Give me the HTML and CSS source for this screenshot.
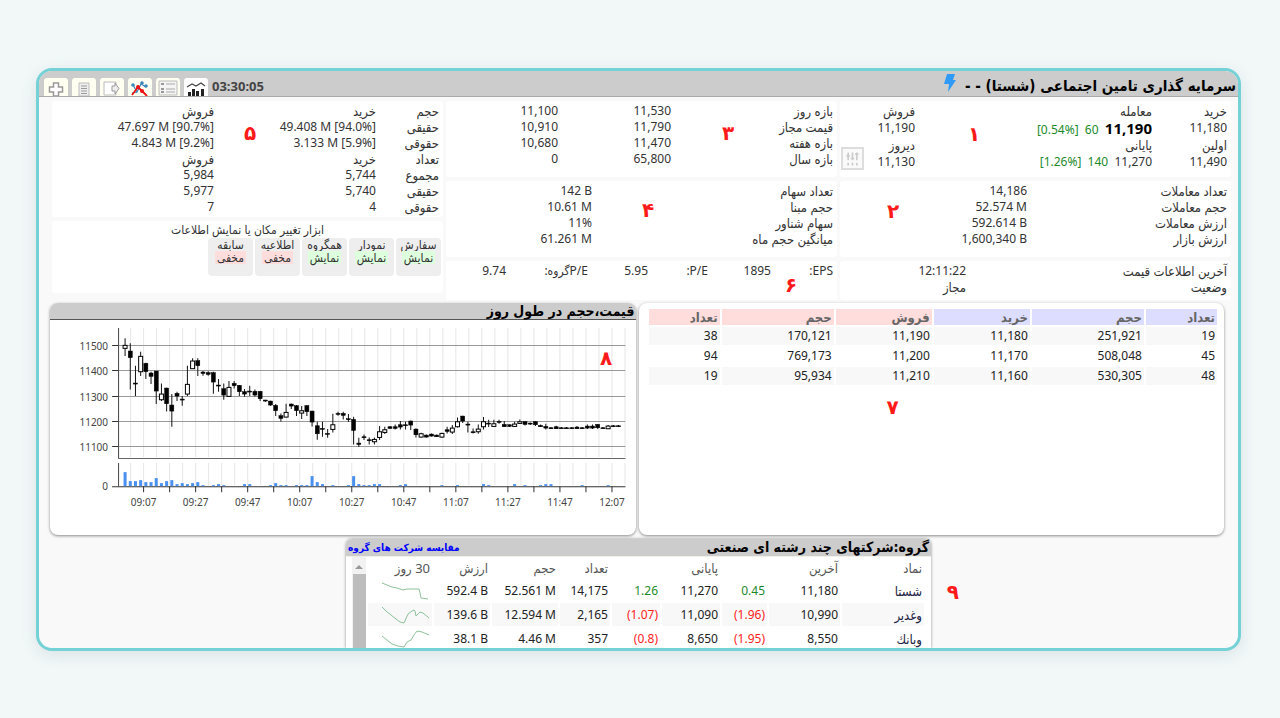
FILE: index.html
```html
<!DOCTYPE html>
<html lang="fa" dir="rtl">
<head>
<meta charset="utf-8">
<meta name="viewport" content="width=device-width, initial-scale=1">
<title>شستا</title>
<link rel="stylesheet" href="styles.css">
</head>
<body>
<main class="frame">
  <header class="topbar">
    <h1 class="topbar-title">سرمایه گذاری تامین اجتماعی (شستا) - -</h1>
    <svg class="bolt" viewBox="0 0 12 18" aria-hidden="true"><path d="M3 0h8L9 6h3L4 18l1-8H0z" fill="#2f9bf7"/></svg>
    <div class="topbar-tools">
      <button class="tab" aria-label="افزودن"><svg viewBox="0 0 24 18"><path d="M9.500 5h5v4h4v5h-4v4h-5v-4h-4V9h4z" fill="#fff" stroke="#999" stroke-width="1.500"/></svg></button>
      <button class="tab" aria-label="یادداشت"><svg viewBox="0 0 24 18"><path d="M7 5h10v13H7z" fill="#eee" stroke="#bbb"/><path d="M9 8h6M9 10.500h6M9 13h6M9 15.500h6" stroke="#999"/></svg></button>
      <button class="tab" aria-label="خروجی"><svg viewBox="0 0 24 18"><path d="M4 4h12v13H4z" fill="#fff" stroke="#bbb"/><path d="M12 8h3V5l4 5.500-4 5.500v-3h-3z" fill="#eee" stroke="#999"/></svg></button>
      <button class="tab" aria-label="نمودار مقایسه"><svg viewBox="0 0 24 18"><path d="M5 7l4 7 4-8 5 3M4 15l5-1" fill="none" stroke="#3b87b8" stroke-width="1.200"/><path d="M4 17l6-8 4 4 5 5" fill="none" stroke="#e11" stroke-width="1.800"/><g fill="#3b87b8"><circle cx="5" cy="7" r="1.800"/><circle cx="14" cy="5" r="1.800"/><circle cx="18" cy="8" r="1.800"/></g><g fill="#e11"><circle cx="10" cy="9" r="2"/><circle cx="14" cy="13" r="2"/></g></svg></button>
      <button class="tab" aria-label="فهرست"><svg viewBox="0 0 24 18"><path d="M3 3h18v14H3z" fill="#f4f4f4" stroke="#bbb"/><path d="M5 6h3M5 11h3M5 14h3" stroke="#999" stroke-width="2"/><path d="M10 6h9M10 11h9M10 14h9" stroke="#aaa"/></svg></button>
      <button class="tab tab-active" aria-label="آمار"><svg viewBox="0 0 24 18"><path d="M4 18v-4h3v4zM8 18v-7h3v7zM12 18v-5h3v5zM17 18v-7h3v7z" fill="#222"/><path d="M3 9l5-3 4 2 5-3 4 3" fill="none" stroke="#444" stroke-width="1.200"/></svg></button>
      <time class="clock">03:30:05</time>
    </div>
  </header>

  <section class="info">
    <div class="stack">
      <div class="panel quote">
        <span>خرید</span><span>معامله</span><span>فروش</span>
        <span class="n">11,180</span><span class="n"><span class="up">[0.54%]&nbsp; 60</span>&nbsp; <b class="last">11,190</b></span><span class="n">11,190</span>
        <span>اولین</span><span>پایانی</span><span>دیروز</span>
        <span class="n">11,490</span><span class="n"><span class="up">[1.26%]&nbsp; 140</span>&nbsp; 11,270</span><span class="n">11,130</span>
        <button class="adjust" aria-label="تنظیمات"><svg viewBox="0 0 22 22"><path d="M6 4v9M11 4v9M16 4v9M4 8h4M9 11h4M14 6h4M6 16v3M11 16v3M16 16v3" stroke="#ccc" stroke-width="2"/></svg></button>
        <span class="mark mark-1">۱</span>
      </div>
      <div class="panel trades">
        <span>تعداد معاملات</span><span class="n">14,186</span>
        <span>حجم معاملات</span><span class="n">52.574 M</span>
        <span>ارزش معاملات</span><span class="n">592.614 B</span>
        <span>ارزش بازار</span><span class="n">1,600,340 B</span>
        <span class="mark mark-2">۲</span>
      </div>
      <div class="panel status">
        <span>آخرین اطلاعات قیمت</span><span class="n">12:11:22</span>
        <span>وضعیت</span><span>مجاز</span>
      </div>
    </div>
    <div class="stack">
      <div class="panel ranges">
        <span>بازه روز</span><span class="n">11,530</span><span class="n">11,100</span>
        <span>قیمت مجاز</span><span class="n">11,790</span><span class="n">10,910</span>
        <span>بازه هفته</span><span class="n">11,470</span><span class="n">10,680</span>
        <span>بازه سال</span><span class="n">65,800</span><span class="n">0</span>
        <span class="mark mark-3">۳</span>
      </div>
      <div class="panel shares">
        <span>تعداد سهام</span><span class="n">142 B</span>
        <span>حجم مبنا</span><span class="n">10.61 M</span>
        <span>سهام شناور</span><span class="n">11%</span>
        <span>میانگین حجم ماه</span><span class="n">61.261 M</span>
        <span class="mark mark-4">۴</span>
      </div>
      <div class="panel ratios">
        <span>EPS:</span><span class="n">1895</span>
        <span>P/E:</span><span class="n">5.95</span>
        <span>P/Eگروه:</span><span class="n">9.74</span>
        <span class="mark mark-6">۶</span>
      </div>
    </div>
    <div class="stack">
      <div class="panel clients">
        <span>حجم</span><span>خرید</span><span>فروش</span>
        <span>حقیقی</span><span class="n">49.408 M [94.0%]</span><span class="n">47.697 M [90.7%]</span>
        <span>حقوقی</span><span class="n">3.133 M [5.9%]</span><span class="n">4.843 M [9.2%]</span>
        <span>تعداد</span><span>خرید</span><span>فروش</span>
        <span>مجموع</span><span class="n">5,744</span><span class="n">5,984</span>
        <span>حقیقی</span><span class="n">5,740</span><span class="n">5,977</span>
        <span>حقوقی</span><span class="n">4</span><span class="n">7</span>
        <span class="mark mark-5">۵</span>
      </div>
      <div class="panel tools">
        <p class="tools-title">ابزار تغییر مکان یا نمایش اطلاعات</p>
        <div class="tools-row">
          <button class="tool">سفارش<span class="on">نمایش</span></button>
          <button class="tool">نمودار<span class="on">نمایش</span></button>
          <button class="tool">همگروه<span class="on">نمایش</span></button>
          <button class="tool">اطلاعیه<span class="off">مخفی</span></button>
          <button class="tool">سابقه<span class="off">مخفی</span></button>
        </div>
      </div>
    </div>
  </section>

  <section class="boxes">
    <div class="box orders">
      <table class="book">
        <colgroup><col class="w-count"><col class="w-vol"><col class="w-price"><col class="w-price"><col class="w-vol"><col class="w-count"></colgroup>
        <thead><tr><th class="buy">تعداد</th><th class="buy">حجم</th><th class="buy">خرید</th><th class="sell">فروش</th><th class="sell">حجم</th><th class="sell">تعداد</th></tr></thead>
        <tbody>
          <tr><td>19</td><td>251,921</td><td>11,180</td><td>11,190</td><td>170,121</td><td>38</td></tr>
          <tr><td>45</td><td>508,048</td><td>11,170</td><td>11,200</td><td>769,173</td><td>94</td></tr>
          <tr><td>48</td><td>530,305</td><td>11,160</td><td>11,210</td><td>95,934</td><td>19</td></tr>
        </tbody>
      </table>
      <span class="mark mark-7">۷</span>
    </div>
    <div class="box">
      <h2 class="box-title">قیمت،حجم در طول روز</h2>
      <svg id="chart" class="chart" viewBox="0 0 585 214" role="img" aria-label="قیمت و حجم در طول روز"></svg>
      <span class="mark mark-8">۸</span>
    </div>
  </section>

  <section class="group">
    <header class="group-head">
      <h2>گروه:شرکتهای چند رشته ای صنعتی</h2>
      <a href="#compare">مقایسه شرکت های گروه</a>
    </header>
    <div class="group-body">
      <table class="peers">
        <colgroup><col class="p1"><col class="p2"><col class="p3"><col class="p4"><col class="p5"><col class="p6"><col class="p7"><col class="p8"><col class="p9"></colgroup>
        <thead><tr><th>نماد</th><th>آخرین</th><th></th><th>پایانی</th><th></th><th>تعداد</th><th>حجم</th><th>ارزش</th><th>30 روز</th></tr></thead>
        <tbody>
          <tr><td class="name">شستا</td><td>11,180</td><td class="up">0.45</td><td>11,270</td><td class="up">1.26</td><td>14,175</td><td>52.561 M</td><td>592.4 B</td><td><svg class="spark" viewBox="0 0 48 18"><path d="M0 1l5 2 5 2 5 1 6 2 4-1 5 0 7 0 1 4 1 5 7 1"/></svg></td></tr>
          <tr><td class="name">وغدیر</td><td>10,990</td><td class="down">(1.96)</td><td>11,090</td><td class="down">(1.07)</td><td>2,165</td><td>12.594 M</td><td>139.6 B</td><td><svg class="spark" viewBox="0 0 48 18"><path d="M0 1l4 4 5 4 5 4 4 3 4 1 4-9 4-3 2-1 1 1 1 5 4-4 3 1 6 5"/></svg></td></tr>
          <tr><td class="name">وبانك</td><td>8,550</td><td class="down">(1.95)</td><td>8,650</td><td class="down">(0.8)</td><td>357</td><td>4.46 M</td><td>38.1 B</td><td><svg class="spark" viewBox="0 0 48 18"><path d="M0 6l5 4 5 4 6 2 6 1 3-5 4-2 3-5 3-4 5 1 7 3"/></svg></td></tr>
        </tbody>
      </table>
      <div class="scroll"><span class="scroll-up"></span><span class="scroll-thumb"></span></div>
    </div>
    <span class="mark mark-9">۹</span>
  </section>
</main>
<script src="chart.js"></script>
</body>
</html>
```
FILE: styles.css
```css
* { box-sizing: border-box; }
body {
  margin: 0;
  padding: 68px 39px 68px 36px;
  background: #f2f8f8;
  color: #333;
  font: 12px/16px "Noto Sans", "DejaVu Sans Condensed", "DejaVu Sans", sans-serif;
}
h1, h2, p { margin: 0; }
button { font: inherit; color: inherit; border: 0; padding: 0; cursor: pointer; }
.frame {
  background: #f9f9f9;
  border: 3px solid #74d1d5;
  border-radius: 16px;
  overflow: hidden;
  box-shadow: 0 4px 16px #d8e2e6;
}
.up { color: #1c8a2c; }
.down { color: #f22; }
.mark {
  position: absolute;
  color: #ff1a1a;
  font: bold 20px/20px "DejaVu Sans", sans-serif;
}

.topbar {
  display: flex;
  align-items: stretch;
  height: 26px;
  padding: 0 2px 0 5px;
  background: #ccc;
  border-bottom: 1px solid #aaa;
}
.topbar-title { font: bold 15px/30px "DejaVu Sans Condensed", sans-serif; color: #000; }
.bolt { width: 12px; height: 18px; margin: 3px 9px 0 0; }
.topbar-tools { display: flex; direction: ltr; align-items: flex-end; gap: 4px; margin-right: auto; }
.tab { width: 24px; height: 18px; background: #fffff2; border-radius: 3px 3px 0 0; }
.tab-active { background: #fff; }
.tab svg { display: block; width: 24px; height: 18px; }
.clock { font: bold 13px/20px "Noto Sans", sans-serif; color: #444; }

.info { display: grid; grid-template-columns: repeat(3, 1fr); gap: 3px; padding: 4px 7px 0 13px; }
.stack { display: flex; flex-direction: column; gap: 4px; }
.panel { position: relative; display: grid; align-content: start; padding: 2px 4px; background: #fff; border-radius: 3px; font-size: 13px; }
.panel .n { direction: ltr; text-align: right; white-space: nowrap; font-size: 12px; }
.quote { grid-template-columns: 75fr 237fr 71fr; min-height: 76px; grid-auto-rows: 17px; }
.last { font-size: 15px; color: #000; }
.trades { grid-template-columns: 200fr 183fr; min-height: 76px; }
.status { grid-template-columns: 261fr 122fr; min-height: 39px; }
.ranges { grid-template-columns: 162fr 113fr 108fr; min-height: 76px; }
.shares { grid-template-columns: 241fr 142fr; min-height: 76px; }
.ratios { grid-template-columns: 62fr 63fr 60fr 60fr 82fr 56fr; min-height: 39px; font-size: 12px; }
.clients { grid-template-columns: 63fr 162fr 158fr; min-height: 114px; }
.adjust { position: absolute; left: 1px; bottom: 7px; width: 23px; height: 23px; background: #fafafa; border: 2px solid #ddd; }
.adjust svg { display: block; width: 100%; }
.tools { min-height: 72px; padding: 0 2px; font-size: 12px; }
.tools-title { line-height: 17px; text-align: center; }
.tools-row { display: flex; gap: 2px; }
.tool { display: flex; flex-direction: column; align-items: center; width: 45px; height: 38px; background: #eee; border-radius: 4px; line-height: 13px; }
.on, .off { padding: 0 2px; }
.on { background: #dfd; }
.off { background: #fdd; }

.boxes { display: grid; grid-template-columns: 1fr 1fr; gap: 3px; padding: 3px 14px 0 11px; }
.box { position: relative; min-height: 232px; background: #fff; border-radius: 8px; box-shadow: 0 1px 3px #888; overflow: hidden; }
.box-title { padding: 0 1px; background: #ccc; border-bottom: 1px solid #555; font: bold 14px/16px "DejaVu Sans Condensed", sans-serif; color: #000; }
.chart { display: block; direction: ltr; width: 100%; }
.chart text { font: 10px "Noto Sans", sans-serif; fill: #444; }

.orders { padding: 4px 5px 4px 8px; }
.book { width: 100%; table-layout: fixed; border-spacing: 2px; color: #222; }
.book th { padding: 0 2px; line-height: 16px; text-align: right; color: #666; font-size: 13px; }
.book td { padding: 0 2px; line-height: 18px; text-align: right; }
.book tr:nth-child(odd) td { background: #f8f8f8; }
.book .buy { background: #ddf; }
.book .sell { background: #fdd; }
.w-count { width: 71px; }
.w-vol { width: 112px; }
.w-price { width: 96px; }

.group { position: relative; width: 585px; margin: 4px auto 0; background: #fff; border-radius: 6px 6px 0 0; box-shadow: 0 0 3px #888; }
.group-head { display: flex; justify-content: space-between; padding: 0 2px; background: #ccc; border-radius: 6px 6px 0 0; }
.group-head h2 { font: bold 14px/17px "DejaVu Sans Condensed", sans-serif; color: #000; }
.group-head a { font: bold 10px/17px "DejaVu Sans Condensed", sans-serif; color: #00f; text-decoration: none; }
.group-body { display: flex; max-height: 92px; overflow: hidden; padding: 0 5px 0 6px; border-top: 1px solid #f0f0e8; }
.peers { flex: 1; table-layout: fixed; border-spacing: 2px 1px; color: #222; }
.peers th { padding: 0 2px; height: 20px; text-align: right; color: #555; font-weight: normal; font-size: 13px; }
.peers td { padding: 0 2px; height: 23px; direction: ltr; text-align: right; white-space: nowrap; }
.peers tr:nth-child(even) td { background: #f8f8f8; }
.peers .name { color: #224; font-size: 13px; }
.peers .up { color: #1c8a2c; }
.peers .down { color: #f22; }
.p1 { width: 82px; } .p2 { width: 71px; } .p3 { width: 45px; }
.p4 { width: 58px; } .p5 { width: 48px; } .p6 { width: 50px; }
.p7 { width: 66px; } .p8 { width: 56px; } .p9 { width: 64px; }
.spark { display: block; width: 48px; height: 18px; margin-left: auto; }
.spark path { fill: none; stroke: #8fc19a; stroke-width: 1; }
.scroll { display: flex; flex-direction: column; align-items: center; width: 14px; background: #f2f2f2; }
.scroll-up { margin: 8px 0 5px; border: 4px solid transparent; border-top: 0; border-bottom-color: #999; }
.scroll-thumb { flex: 1; width: 13px; background: #bdbdbd; }

.mark-1 { left: 128px; top: 23px; }
.mark-2 { left: 47px; top: 20px; }
.mark-3 { left: 276px; top: 22px; }
.mark-4 { left: 196px; top: 19px; }
.mark-5 { left: 192px; top: 22px; }
.mark-6 { left: 339px; top: 14px; }
.mark-7 { left: 248px; top: 94px; }
.mark-8 { left: 550px; top: 45px; }
.mark-9 { right: -28px; top: 43px; }
```
FILE: chart.js
```js
// Intraday candles, one per two minutes, in thirds of a pixel:
// [high, low, body top, body bottom, 1 = rising (hollow)]
const candles = [
  [130,183,151,160,1],[145,283,168,188],[212,303,264,267],[170,243,184,230,1],[203,252,205,230],[230,267,234,244],
  [228,327,228,288],[265,318,297,314,1],[278,349,279,326],[297,395,330,348],[290,318,295,303],[303,332,312,315],
  [212,303,268,297,1],[190,222,198,221,1],[190,243,197,212],[228,242,231,235],[229,242,233,238],[230,296,233,261],
  [252,290,270,273],[265,314,281,300],[258,304,277,304,1],[258,280,265,272],[270,303,271,290],[282,305,290,297],
  [272,303,288,291],[283,304,289,300],[288,318,289,311],[314,320,315,318],[317,332,318,330],[327,363,331,347],
  [355,379,362,370],[326,367,352,366,1],[325,342,327,333],[330,363,332,347],[333,372,347,354,1],[330,363,332,350],
  [347,394,348,381],[380,434,392,416],[380,425,400,403],[402,428,415,418],[356,412,389,403,1],[350,362,355,358],
  [350,373,355,361],[357,380,371,374],[365,448,373,406],[428,456,444,448],[418,435,425,428],[427,448,434,437],
  [427,448,433,440,1],[393,435,410,427,1],[395,417,404,412,1],[393,402,395,400],[388,403,395,400],[378,403,389,396],
  [380,403,389,392],[376,405,378,390],[400,427,402,419],[413,427,416,426,1],[418,427,420,426],[415,424,417,423],
  [418,426,420,425],[413,428,415,426,1],[395,415,404,409],[390,417,399,411,1],[367,397,380,395,1],[362,384,363,378],
  [380,412,387,390],[400,415,410,413],[388,416,402,410,1],[366,403,380,395,1],[374,396,384,387],[374,396,386,394,1],
  [374,386,379,382],[378,396,388,395],[388,396,389,394],[380,396,387,394,1],[373,386,380,385,1],[378,391,380,388],
  [382,390,384,387],[378,393,380,389],[388,396,391,395],[386,403,394,399],[396,402,398,401],[392,402,395,401],
  [396,402,398,401],[396,402,398,401],[396,402,398,401],[393,402,396,401],[396,402,398,401],[388,402,393,399],
  [388,402,393,399],[387,402,388,398],[396,402,398,401],[390,402,393,401,1],[390,396,392,395],[390,396,392,395]
];
const volumes = [14,5,5,6,4,4,8,3,5,6,2,3,2,3,4,1,0,1,2,1,0,0,0,2,2,0,0,0,1,3,1,1,0,1,1,1,10,4,2,0,1,0,0,1,10,2,1,1,2,2,0,0,0,1,2,0,0,0,0,0,0,1,0,0,1,0,0,0,0,2,1,0,0,0,0,2,0,1,0,0,1,2,2,0,0,0,0,0,1,0,0,0,0,1,0,0];
const parts = [];
const line = (x1, y1, x2, y2, c) => parts.push(`<path d="M${x1} ${y1}L${x2} ${y2}" stroke="${c}"/>`);
const y = v => v / 3 - 25;

for (let x = 80.5; x < 575; x += 13) {
  line(x, 8, x, 137, "#e6e6e6");
  line(x, 143, x, 165, "#e6e6e6");
}
[11500, 11400, 11300, 11200, 11100].forEach((p, i) => {
  const py = Math.round(25 + i * 25.25) + 0.5;
  line(68, py, 575, py, "#999");
  line(62, py, 68, py, "#333");
  parts.push(`<text x="58" y="${py + 4}" text-anchor="end">${p}</text>`);
});
line(68.5, 8, 68.5, 138, "#444");
line(68, 138.5, 575, 138.5, "#666");
line(68.5, 143, 68.5, 166, "#444");
line(62, 166.5, 575, 166.5, "#333");
parts.push('<text x="58" y="170" text-anchor="end">0</text>');
["09:07", "09:27", "09:47", "10:07", "10:27", "10:47", "11:07", "11:27", "11:47", "12:07"].forEach((t, i) => {
  const x = Math.round(93 + i * 52) + 0.5;
  line(x, 166, x, 172, "#333");
  if (i < 9) line(x + 26, 166, x + 26, 172, "#333");
  parts.push(`<text x="${x}" y="186" text-anchor="middle">${t}</text>`);
});
candles.forEach(([hi, lo, top, bottom, rising], i) => {
  const x = 75 + i * 5.19;
  line(x, y(hi), x, y(lo), "#111");
  parts.push(`<rect x="${x - 2}" y="${y(top)}" width="4" height="${(bottom - top) / 3}" fill="${rising ? "#fff" : "#000"}" stroke="#000" stroke-width="${rising ? 1 : 0.5}"/>`);
  if (volumes[i]) parts.push(`<rect x="${x - 1.5}" y="${166 - volumes[i]}" width="3" height="${volumes[i]}" fill="#4a90f0"/>`);
});
document.getElementById("chart").innerHTML = parts.join("");
```
